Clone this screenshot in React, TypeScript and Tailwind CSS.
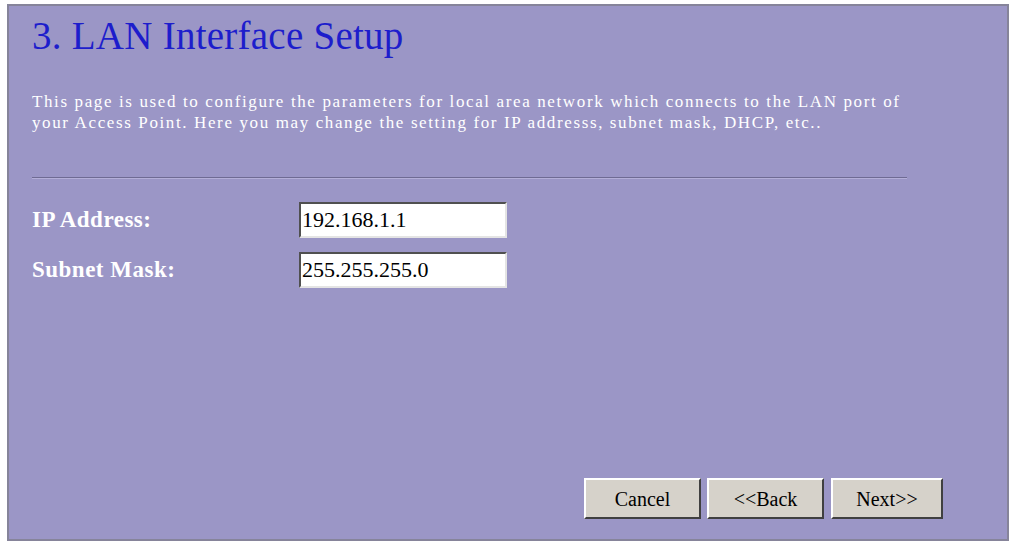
export default function App() {
  const fields = [
    { label: "IP Address:", value: "192.168.1.1" },
    { label: "Subnet Mask:", value: "255.255.255.0" },
  ];
  const buttons = [
    { label: "Cancel", cls: "w-[117px]" },
    { label: "<<Back", cls: "w-[117px] ml-[6px]" },
    { label: "Next>>", cls: "w-[112px] ml-[7px]" },
  ];

  return (
    <div
      className="w-[1012px] h-[543px] bg-white pt-[4px] pl-[7px]"
      style={{ fontFamily: '"Liberation Serif", "Times New Roman", serif' }}
    >
      <div className="w-[1002px] h-[537px] border-2 border-[#86849a] bg-[#9b96c6] flex flex-col pl-[23px] pr-[64px]">
        <h1 className="mt-[8px] text-[39px] leading-[44px] text-[#1d1dcc] tracking-[0.25px] whitespace-nowrap">
          3. LAN Interface Setup
        </h1>

        <p className="mt-[33px] text-[17px] leading-[21px] text-white tracking-[1.62px] whitespace-nowrap">
          This page is used to configure the parameters for local area network which connects to the LAN port of
          <br />
          your Access Point. Here you may change the setting for IP addresss, subnet mask, DHCP, etc..
        </p>

        <div className="mt-[44px] w-[875px] h-[2px] border-t border-[#6f6b93] border-b border-b-[#b4afd8]" />

        <div className="mt-[23px] flex flex-col gap-[14px]">
          {fields.map((f) => (
            <div key={f.label} className="flex items-center h-[36px]">
              <span className="w-[267px] text-[23px] leading-[28px] font-bold text-white tracking-[0.5px] whitespace-nowrap">
                {f.label}
              </span>
              <div className="w-[208px] h-[36px] bg-white border-2 border-t-[#505050] border-l-[#505050] border-b-[#e4e4e4] border-r-[#e4e4e4] flex items-center pl-[1px] text-[22px] leading-[26px] text-black">
                {f.value}
              </div>
            </div>
          ))}
        </div>

        <div className="mt-auto mb-[20px] flex justify-end">
          {buttons.map((b) => (
            <button
              key={b.label}
              className={`${b.cls} h-[41px] bg-[#d6d2ca] border-2 border-t-white border-l-white border-b-[#404040] border-r-[#404040] text-[20px] leading-[24px] text-black`}
            >
              {b.label}
            </button>
          ))}
        </div>
      </div>
    </div>
  );
}
